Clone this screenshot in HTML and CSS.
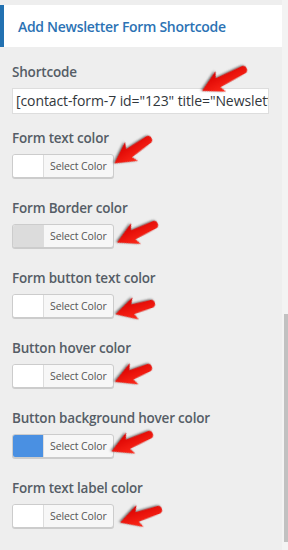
FILE: index.html
```html
<!DOCTYPE html>
<html>
<head>
<meta charset="utf-8">
<link rel="stylesheet" href="styles.css">
</head>
<body>
<div class="page">
  <div class="main">
    <div class="header">Add Newsletter Form Shortcode</div>
    <div class="fields">
      <div class="field field-text">
        <div class="label">Shortcode</div>
        <div class="input">[contact-form-7 id="123" title="Newsletter"]</div>
      </div>
      <div class="field">
        <div class="label">Form text color</div>
        <div class="picker"><span class="swatch"></span><span class="pick-text">Select Color</span></div>
      </div>
      <div class="field">
        <div class="label">Form Border color</div>
        <div class="picker"><span class="swatch swatch-gray"></span><span class="pick-text">Select Color</span></div>
      </div>
      <div class="field">
        <div class="label">Form button text color</div>
        <div class="picker"><span class="swatch"></span><span class="pick-text">Select Color</span></div>
      </div>
      <div class="field">
        <div class="label">Button hover color</div>
        <div class="picker"><span class="swatch"></span><span class="pick-text">Select Color</span></div>
      </div>
      <div class="field">
        <div class="label">Button background hover color</div>
        <div class="picker"><span class="swatch swatch-blue"></span><span class="pick-text">Select Color</span></div>
      </div>
      <div class="field">
        <div class="label">Form text label color</div>
        <div class="picker"><span class="swatch"></span><span class="pick-text">Select Color</span></div>
      </div>
    </div>
  </div>
  <div class="scrollbar"><div class="thumb"></div></div>
</div>
<svg class="arrows" width="288" height="550" viewBox="0 0 288 550">
  <defs>
    <linearGradient id="rg" x1="0" y1="0" x2="0" y2="1">
      <stop offset="0" stop-color="#ff2a1a"/>
      <stop offset="1" stop-color="#d80000"/>
    </linearGradient>
  </defs>
  <g transform="translate(243,70) rotate(152.9)"><path class="arrow" d="M0,-4 L28,-5 L25,-11.5 L46,0 L25,11.5 L28,5 L0,4 A4,4 0 0 1 0,-4Z"/></g>
  <g transform="translate(148,140) rotate(145.2)"><path class="arrow" d="M0,-4 L23,-5 L20,-11.5 L41,0 L20,11.5 L23,5 L0,4 A4,4 0 0 1 0,-4Z"/></g>
  <g transform="translate(154,225) rotate(154.6)"><path class="arrow" d="M0,-4 L23,-5 L20,-11.5 L41,0 L20,11.5 L23,5 L0,4 A4,4 0 0 1 0,-4Z"/></g>
  <g transform="translate(151,304) rotate(163.9)"><path class="arrow" d="M0,-4 L19,-5 L16,-11.5 L37,0 L16,11.5 L19,5 L0,4 A4,4 0 0 1 0,-4Z"/></g>
  <g transform="translate(148,368) rotate(157.4)"><path class="arrow" d="M0,-4 L18,-5 L15,-11.5 L36,0 L15,11.5 L18,5 L0,4 A4,4 0 0 1 0,-4Z"/></g>
  <g transform="translate(149,435) rotate(156.3)"><path class="arrow" d="M0,-4 L23,-5 L20,-11.5 L41,0 L20,11.5 L23,5 L0,4 A4,4 0 0 1 0,-4Z"/></g>
  <g transform="translate(158,510) rotate(161.6)"><path class="arrow" d="M0,-4 L22,-5 L19,-11.5 L40,0 L19,11.5 L22,5 L0,4 A4,4 0 0 1 0,-4Z"/></g>
</svg>
</body>
</html>
```

FILE: styles.css
```css
html, body {
  margin: 0;
  padding: 0;
  background: #eeeeee;
  width: 288px;
  height: 550px;
  overflow: hidden;
  font-family: "Open Sans", "Noto Sans", sans-serif;
}

.page {
  display: flex;
  height: 550px;
  position: relative;
}

.main {
  width: 282px;
  padding-top: 5px;
}

.header {
  height: 42px;
  background: #ffffff;
  border-left: 4px solid #2271b1;
  padding-left: 14px;
  box-sizing: border-box;
  display: flex;
  align-items: center;
  color: #2b72b4;
  font-size: 14px;
  font-weight: 600;
  letter-spacing: -0.3px;
}

.fields {
  padding: 15px 0 0 12px;
}

.field {
  display: flex;
  flex-direction: column;
  align-items: flex-start;
  margin-bottom: 20px;
}

.field-text {
  margin-bottom: 14px;
}

.label {
  height: 20px;
  line-height: 20px;
  font-size: 13.5px;
  font-weight: 600;
  color: #555d66;
  letter-spacing: -0.2px;
  margin-bottom: 6px;
  white-space: nowrap;
}

.input {
  width: 257px;
  height: 26px;
  box-sizing: border-box;
  border: 1px solid #dddddd;
  background: #ffffff;
  padding: 0 3px;
  line-height: 24px;
  font-size: 14px;
  color: #32373c;
  white-space: nowrap;
  overflow: hidden;
  letter-spacing: -0.1px;
}

.picker {
  display: flex;
  height: 24px;
  box-sizing: border-box;
  border: 1px solid #cccccc;
  border-radius: 3px;
  box-shadow: 0 1px 0 #cccccc;
  overflow: hidden;
  background: #f7f7f7;
}

.swatch {
  width: 30px;
  background: #ffffff;
  border-right: 1px solid #dddddd;
}

.swatch-gray {
  background: #dcdcdc;
}

.swatch-blue {
  background: #4a90e2;
}

.pick-text {
  padding: 0 6px;
  line-height: 22px;
  font-size: 10.5px;
  color: #555555;
  letter-spacing: -0.1px;
}

.scrollbar {
  width: 6px;
  background: #f3f3f3;
  padding-top: 314px;
  box-sizing: border-box;
  display: flex;
  justify-content: flex-end;
}

.thumb {
  width: 4px;
  height: 228px;
  background: #c1c1c1;
}

.arrows {
  position: absolute;
  left: 0;
  top: 0;
  pointer-events: none;
}

.arrow {
  fill: url(#rg);
  filter: drop-shadow(1.5px 1.5px 1px rgba(0, 0, 0, 0.55));
}
```
